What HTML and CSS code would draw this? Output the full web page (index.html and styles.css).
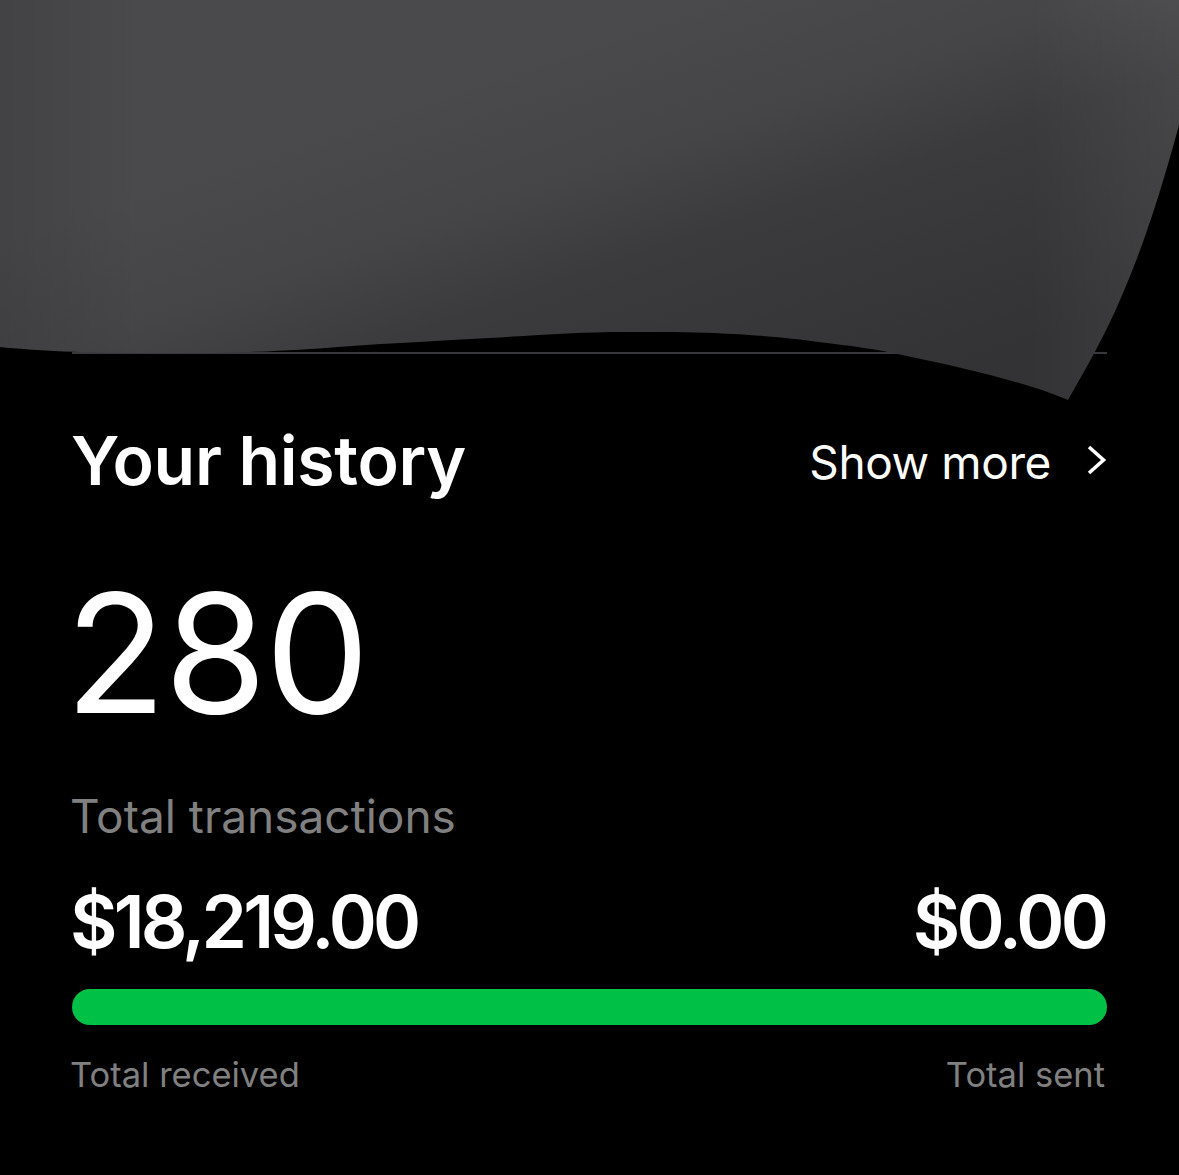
FILE: index.html
```html
<!DOCTYPE html>
<html lang="en">
<head>
    <meta charset="UTF-8">
    <meta name="viewport" content="width=device-width, initial-scale=1.0">
    <title>Your history</title>
    <link rel="stylesheet" href="styles.css">
</head>
<body>

<div class="history">
    <div class="history-head">
        <h2>Your history</h2>
        <a class="show-more">
            <span>Show more</span>
            <svg width="20" height="32" viewBox="0 0 20 32"><path d="M2 3L16.500 16L2 29" fill="none" stroke="#fff" stroke-width="3.6"/></svg>
        </a>
    </div>
    <div class="count">280</div>
    <div class="count-label">Total transactions</div>
    <div class="row amounts">
        <span>$18,219.00</span>
        <span>$0.00</span>
    </div>
    <div class="bar"></div>
    <div class="row bar-labels">
        <span>Total received</span>
        <span>Total sent</span>
    </div>
</div>

<!-- sheet lying over the top of the page -->
<svg class="sheet" width="1179" height="405" viewBox="0 0 1179 405">
    <defs>
        <linearGradient id="sheetFill" gradientUnits="userSpaceOnUse" x1="430" y1="90" x2="570" y2="500">
            <stop offset="0" stop-color="#4a4a4c"/>
            <stop offset="0.3" stop-color="#454547"/>
            <stop offset="0.52" stop-color="#3b3b3d"/>
            <stop offset="1" stop-color="#333335"/>
        </linearGradient>
        <linearGradient id="sheetRight" gradientUnits="userSpaceOnUse" x1="1030" y1="0" x2="1179" y2="0">
            <stop offset="0" stop-color="#fff" stop-opacity="0"/>
            <stop offset="1" stop-color="#fff" stop-opacity="0.06"/>
        </linearGradient>
        <linearGradient id="sheetLeft" gradientUnits="userSpaceOnUse" x1="0" y1="0" x2="140" y2="0">
            <stop offset="0" stop-color="#000" stop-opacity="0.1"/>
            <stop offset="1" stop-color="#000" stop-opacity="0"/>
        </linearGradient>
        <path id="sheetShape" d="M0 0H1179V125C1160 195 1142 250 1120 300C1105 335 1088 365 1068 400C1025 382 965 368 902 355C880 350 860 347 827 343C800 339 760 335 714 333C690 332 660 332 624 332C580 332 540 335 489 338C440 341 390 343 338 347C300 350 250 353 188 353C100 354 40 351 0 347Z"/>
    </defs>
    <use href="#sheetShape" fill="url(#sheetFill)"/>
    <use href="#sheetShape" fill="url(#sheetRight)"/>
    <use href="#sheetShape" fill="url(#sheetLeft)"/>
</svg>

</body>
</html>
```

FILE: styles.css
```css
body {
    font-family: Inter, "Liberation Sans", Arial, sans-serif;
    background-color: #000;
    color: #fff;
    margin: 0;
    height: 1175px;
    overflow: hidden;
}
.sheet {
    position: absolute;
    top: 0;
    left: 0;
}
.history {
    padding: 352px 72px 0 72px;
}
.history-head {
    border-top: 2px solid #38383a;
    display: flex;
    justify-content: space-between;
    align-items: center;
    padding-top: 68px;
    height: 76px;
}
.history-head h2 {
    font-size: 68px;
    font-weight: 600;
    letter-spacing: -0.3px;
    margin: 0 0 0 -1px;
}
.show-more {
    display: flex;
    align-items: center;
    gap: 36px;
    font-size: 46px;
    letter-spacing: -0.4px;
}
.show-more span {
    margin-top: 4px;
}
.count {
    font-size: 166px;
    line-height: 170px;
    letter-spacing: -2px;
    margin: 70px 0 0 -7px;
}
.count-label {
    font-size: 46px;
    line-height: 54px;
    color: #808080;
    margin: 51px 0 0 -2px;
}
.row {
    display: flex;
    justify-content: space-between;
    margin-left: -2px;
    margin-right: 2px;
}
.amounts {
    font-size: 73px;
    line-height: 80px;
    font-weight: 600;
    letter-spacing: -3.800px;
    margin-top: 39px;
}
.bar {
    height: 36px;
    border-radius: 18px;
    background: #00c046;
    margin-top: 27px;
}
.bar-labels {
    font-size: 34.500px;
    line-height: 42px;
    color: #808080;
    margin-top: 29px;
}
```
